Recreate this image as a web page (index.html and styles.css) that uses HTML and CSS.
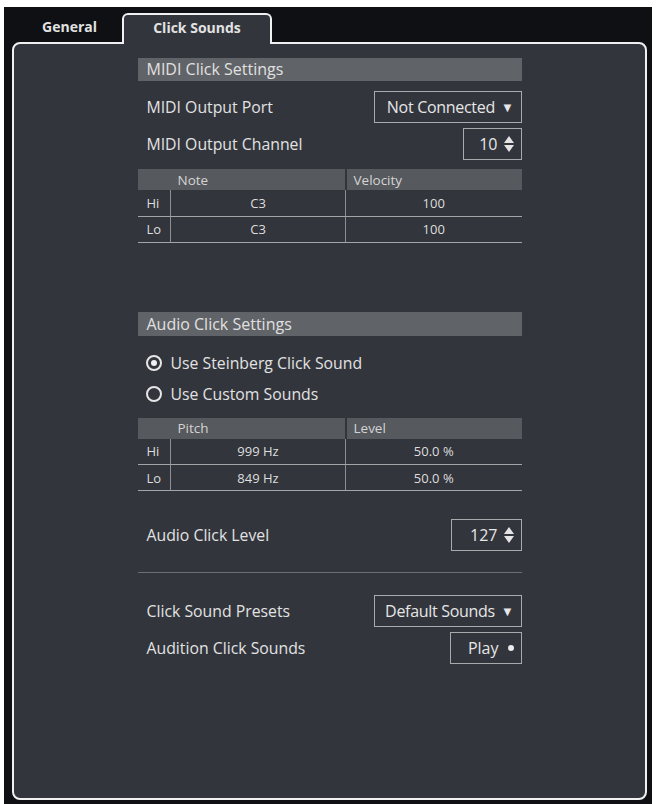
FILE: index.html
```html
<!DOCTYPE html>
<html lang="en">
<head>
    <meta charset="UTF-8">
    <title>Click Sounds</title>
    <link rel="stylesheet" href="styles.css">
</head>
<body>
    <div class="window">
        <!-- Tabs -->
        <div class="tabs">
            <div class="tab">General</div>
            <div class="tab active">Click Sounds</div>
        </div>

        <div class="panel">
            <div class="content">
                <div class="section-title">MIDI Click Settings</div>

                <div class="row first">
                    <span class="label">MIDI Output Port</span>
                    <div class="control dropdown">Not Connected <span class="arrow">&#9660;</span></div>
                </div>
                <div class="row">
                    <span class="label">MIDI Output Channel</span>
                    <div class="control spin">10
                        <svg class="spinner" viewBox="0 0 10 16"><path d="M5 0L10 7H0Z M0 9H10L5 16Z" fill="#e4e4e4"/></svg>
                    </div>
                </div>

                <table class="grid">
                    <tr class="head"><th></th><th>Note</th><th>Velocity</th></tr>
                    <tr><td class="key">Hi</td><td>C3</td><td>100</td></tr>
                    <tr><td class="key">Lo</td><td>C3</td><td>100</td></tr>
                </table>

                <div class="section-title audio">Audio Click Settings</div>

                <label class="radio first-radio"><span class="dot checked"></span>Use Steinberg Click Sound</label>
                <label class="radio"><span class="dot"></span>Use Custom Sounds</label>

                <table class="grid second">
                    <tr class="head"><th></th><th>Pitch</th><th>Level</th></tr>
                    <tr><td class="key">Hi</td><td>999 Hz</td><td>50.0 %</td></tr>
                    <tr><td class="key">Lo</td><td>849 Hz</td><td>50.0 %</td></tr>
                </table>

                <div class="row level">
                    <span class="label">Audio Click Level</span>
                    <div class="control spin wide">127
                        <svg class="spinner" viewBox="0 0 10 16"><path d="M5 0L10 7H0Z M0 9H10L5 16Z" fill="#e4e4e4"/></svg>
                    </div>
                </div>

                <div class="separator"></div>

                <div class="row">
                    <span class="label">Click Sound Presets</span>
                    <div class="control dropdown">Default Sounds <span class="arrow">&#9660;</span></div>
                </div>
                <div class="row">
                    <span class="label">Audition Click Sounds</span>
                    <div class="control play">Play <span class="play-dot"></span></div>
                </div>
            </div>
        </div>
    </div>
</body>
</html>
```

FILE: styles.css
```css
* {
    margin: 0;
    padding: 0;
    box-sizing: border-box;
}

body {
    background: #ffffff;
    font-family: "Open Sans", "Noto Sans", sans-serif;
    color: #dcdcdc;
}

.window {
    margin: 7px 5px 0 4px;
    height: 797px;
    background: #0e1013;
    display: flex;
    flex-direction: column;
}

/* Tabs */
.tabs {
    display: flex;
    height: 35px;
    padding: 6px 0 0 13px;
    position: relative;
    z-index: 2;
}

.tab {
    font-weight: bold;
    font-size: 14px;
    color: #e2e2e2;
    padding: 4px 0 0;
    width: 105px;
    text-align: center;
}

.tab.active {
    width: 150px;
    background: #32353c;
    border: 2px solid #f0f0f0;
    border-bottom: none;
    border-radius: 6px 6px 0 0;
    height: 31px;
    padding-top: 3px;
}

/* Main panel */
.panel {
    flex: 1;
    margin: 0 5px 4px 8px;
    background: #32353c;
    border: 2px solid #f0f0f0;
    border-radius: 8px;
    padding-top: 14px;
}

.content {
    width: 384px;
    margin: 0 auto;
}

.section-title {
    background: #606367;
    height: 23px;
    line-height: 23px;
    padding-left: 9px;
    font-size: 16px;
    color: #e0e0e0;
}

.section-title.audio {
    margin-top: 69px;
    height: 24px;
    line-height: 24px;
}

.row {
    display: flex;
    justify-content: space-between;
    align-items: center;
    padding-left: 9px;
    margin-top: 5px;
}

.row.first {
    margin-top: 10px;
}

.row.level {
    margin-top: 28px;
}

.label {
    font-size: 15.8px;
    color: #e2e2e2;
}

.control {
    height: 32px;
    border: 1px solid #a9aaac;
    display: flex;
    align-items: center;
    justify-content: flex-end;
    padding: 0 7px 0 6px;
    font-size: 16px;
    color: #e6e6e6;
    white-space: nowrap;
}

.dropdown {
    width: 148px;
    letter-spacing: -0.3px;
}

.arrow {
    font-size: 13px;
    margin-left: 6px;
}

.spin {
    width: 59px;
}

.spin.wide {
    width: 71px;
}

.spinner {
    width: 10px;
    height: 16px;
    margin-left: 6px;
}

.play {
    width: 72px;
}

.play-dot {
    width: 6px;
    height: 6px;
    border-radius: 50%;
    background: #ececec;
    margin-left: 9px;
}

/* Tables */
.grid {
    width: 100%;
    border-collapse: collapse;
    margin-top: 9px;
    font-size: 13px;
    color: #dedede;
}

.grid.second {
    margin-top: 11px;
}

.grid th {
    background: #56595d;
    height: 21px;
    text-align: left;
    font-weight: normal;
    font-size: 13.5px;
    padding-left: 7px;
    color: #d4d4d4;
}

.grid th:first-child {
    width: 33px;
}

.grid th:nth-child(2) {
    width: 175px;
    border-right: 2px solid #32353c;
}

.grid td {
    height: 26px;
    text-align: center;
    border-bottom: 1px solid #a3a4a6;
}

.grid td + td {
    border-left: 1px solid #8d8e91;
}

.grid td.key {
    text-align: left;
    padding-left: 9px;
}

/* Radio buttons */
.radio {
    display: flex;
    align-items: center;
    font-size: 15.8px;
    color: #e2e2e2;
    padding-left: 8px;
    height: 26px;
    margin-top: 5px;
}

.radio.first-radio {
    margin-top: 14px;
}

.dot {
    width: 16px;
    height: 16px;
    border: 2px solid #e6e6e6;
    border-radius: 50%;
    margin-right: 9px;
    display: flex;
    align-items: center;
    justify-content: center;
}

.dot.checked::after {
    content: "";
    width: 6px;
    height: 6px;
    border-radius: 50%;
    background: #f0f0f0;
}

.separator {
    height: 1px;
    background: #6c6e72;
    margin: 21px 0 22px;
}
```
